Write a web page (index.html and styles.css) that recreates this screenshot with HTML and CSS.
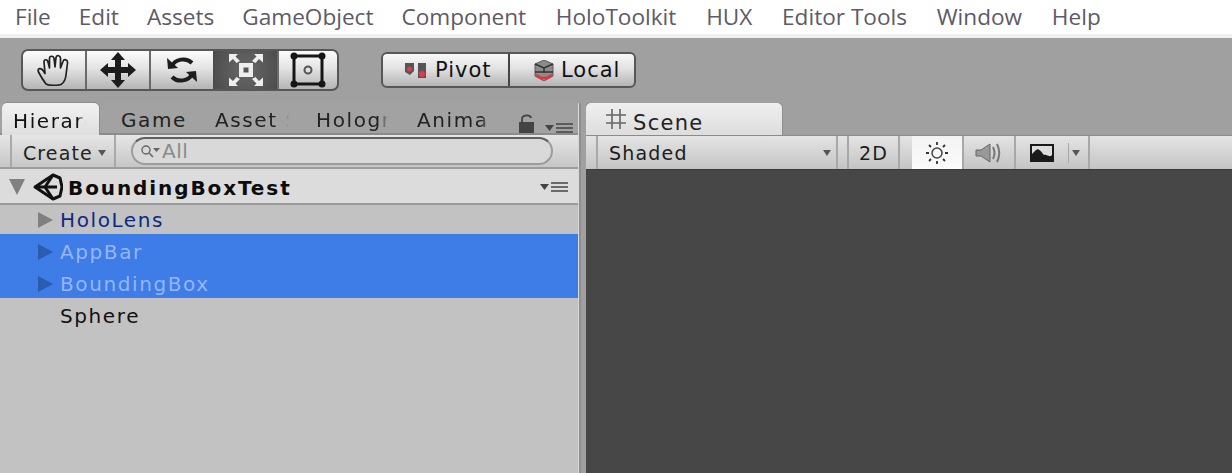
FILE: index.html
```html
<!DOCTYPE html>
<html lang="en">
<head>
<meta charset="utf-8">
<title>Unity Editor</title>
<link rel="stylesheet" href="styles.css">
</head>
<body>
<div class="editor">
  <nav class="menubar">
    <span>File</span><span>Edit</span><span>Assets</span><span>GameObject</span><span>Component</span><span>HoloToolkit</span><span>HUX</span><span>Editor Tools</span><span>Window</span><span>Help</span>
  </nav>

  <div class="toolbar">
    <div class="tools">
      <button class="tool tool-first">
        <svg width="34" height="32" viewBox="0 0 34 32"><path d="M9 30C6 26 3 21 1.500 18C0 14 4 13.500 6 16.500L8 19.500L7 8C7 5 10.500 5 11 8L12.500 14L12.500 4.500C12.500 1.500 16.500 1.500 17 4.500L18 13L19 3.500C19.500 .8 23.500 1.200 23.500 4.500L23.500 14L26 7.500C27 4.500 31 5.500 30.500 9L29 21C28.500 26 26.500 29 24 30.500C19 31.500 12 31.500 9 30Z" fill="none" stroke="#202020" stroke-width="1.700" stroke-linejoin="round"/></svg>
      </button>
      <button class="tool">
        <svg width="36" height="36" viewBox="0 0 36 36"><path d="M18 0L25 8H21V15H28V11L36 18L28 25V21H21V28H25L18 36L11 28H15V21H8V25L0 18L8 11V15H15V8H11Z" fill="#1c1c1c"/></svg>
      </button>
      <button class="tool">
        <svg width="30" height="30" viewBox="0 0 30 30"><path d="M5 11C8 4 19 2 25 8" fill="none" stroke="#1d1d1d" stroke-width="4"/><path d="M0 3L1 14L11 13Z" fill="#1d1d1d"/><path d="M25 19C22 26 11 28 5 22" fill="none" stroke="#1d1d1d" stroke-width="4"/><path d="M30 27L29 16L19 17Z" fill="#1d1d1d"/></svg>
      </button>
      <button class="tool tool-active">
        <svg width="36" height="34" viewBox="0 0 36 34" fill="#eee"><rect x="11" y="10" width="14" height="14"/><rect x="15.500" y="14.500" width="5" height="5" fill="#555"/><path d="M1 1H10L7.500 3.500L12 8L8.500 10L5 6L1 9.500ZM35 1H26L28.500 3.500L24 8L27.500 10L31 6L35 9.500ZM1 33H10L7.500 30.500L12 26L8.500 24L5 28L1 24.500ZM35 33H26L28.500 30.500L24 26L27.500 24L31 28L35 24.500Z"/></svg>
      </button>
      <button class="tool tool-last">
        <svg width="36" height="36" viewBox="0 0 36 36"><path d="M4 4H32V32H4Z" fill="none" stroke="#161616" stroke-width="3"/><circle cx="4" cy="4" r="3.500" fill="#161616"/><circle cx="32" cy="4" r="3.500" fill="#161616"/><circle cx="4" cy="32" r="3.500" fill="#161616"/><circle cx="32" cy="32" r="3.500" fill="#161616"/><circle cx="18" cy="18" r="3.500" fill="none" stroke="#555" stroke-width="2"/></svg>
      </button>
    </div>
    <div class="pivot">
      <button class="pivot-btn pivot-left">
        <svg class="pivot-icon" width="22" height="17" viewBox="0 0 22 17"><path d="M0 1H9V9L5 13L0 10Z" fill="#555"/><circle cx="4.500" cy="7" r="2.500" fill="#e8394a"/><path d="M13 1H21V16H13Z" fill="#555"/><circle cx="17" cy="12" r="3" fill="#e8394a"/></svg>
        <span>Pivot</span>
      </button>
      <button class="pivot-btn pivot-right">
        <svg class="local-icon" width="20" height="21" viewBox="0 0 20 21"><path d="M10 0L19 4V16L10 21L1 16V4Z" fill="#8c8c8c" stroke="#5a5a5a"/><path d="M1 4L10 8L19 4M10 8V13" fill="none" stroke="#333" stroke-width="1.500"/><path d="M1 12H19" stroke="#333" stroke-width="1.500"/><path d="M2 15C6 19 14 19 18 15" fill="none" stroke="#e2363f" stroke-width="2.500"/></svg>
        <span>Local</span>
      </button>
    </div>
  </div>

  <div class="docks">
    <section class="panel-left">
      <div class="tabs">
        <div class="tab tab-active tab-hier"><span class="tab-clip clip-hier">Hierarchy</span></div>
        <div class="tab tab-game"><span>Game</span></div>
        <div class="tab tab-asset"><span class="tab-clip clip-asset">Asset Store</span></div>
        <div class="tab tab-holo"><span class="tab-clip clip-holo">Holographic</span></div>
        <div class="tab tab-anim"><span class="tab-clip clip-anim">Animator</span></div>
        <svg class="lock" width="15" height="19" viewBox="0 0 15 19"><path d="M3 9V5C3 1 11 0 12 4" fill="none" stroke="#444" stroke-width="1.800"/><rect y="8" width="15" height="11" fill="#444"/></svg>
        <svg class="more more-tabs" width="28" height="10" viewBox="0 0 28 10"><path d="M0 2H9L4.500 8Z" fill="#444"/><path d="M11 1H28M11 5H28M11 9H28" stroke="#444" stroke-width="1.600"/></svg>
      </div>
      <div class="hier-bar">
        <div class="create"><span>Create</span><i class="caret"></i></div>
        <div class="search">
          <svg width="22" height="14" viewBox="0 0 22 14"><circle cx="6" cy="6" r="4" fill="none" stroke="#666" stroke-width="1.400"/><path d="M9 9L13 13" stroke="#666" stroke-width="1.600"/><path d="M13 4H20L16.500 8Z" fill="#666"/></svg>
          <span>All</span>
        </div>
      </div>
      <div class="scene-head">
        <i class="arrow-down"></i>
        <svg class="unity" width="30" height="28" viewBox="0 0 30 28"><path d="M12 14L20 2L27 5L29 14L27 23L20 26Z" fill="none" stroke="#111" stroke-width="3" stroke-linejoin="round"/><path d="M12 14L2 14L20 2M2 14L20 26M12 14H24" fill="none" stroke="#111" stroke-width="3" stroke-linejoin="round"/></svg>
        <span class="scene-name">BoundingBoxTest</span>
        <svg class="more" width="28" height="10" viewBox="0 0 28 10"><path d="M0 2H9L4.500 8Z" fill="#444"/><path d="M11 1H28M11 5H28M11 9H28" stroke="#444" stroke-width="1.600"/></svg>
      </div>
      <ul class="tree">
        <li class="row row-first"><i class="arrow-right"></i><span class="prefab">HoloLens</span></li>
        <li class="row row-sel"><i class="arrow-right"></i><span>AppBar</span></li>
        <li class="row row-sel"><i class="arrow-right"></i><span>BoundingBox</span></li>
        <li class="row"><i class="arrow-none"></i><span>Sphere</span></li>
      </ul>
    </section>

    <section class="panel-right">
      <div class="scene-tabs">
        <div class="scene-tab">
          <svg width="20" height="20" viewBox="0 0 20 20"><path d="M6 0V20M14 0V20M0 6H20M0 14H20" stroke="#666" stroke-width="1.600"/></svg>
          <span class="scene-label">Scene</span>
        </div>
      </div>
      <div class="scene-bar">
        <div class="sb sb-gap"></div>
        <div class="sb sb-shaded"><span>Shaded</span><i class="caret"></i></div>
        <div class="sb sb-gap2"></div>
        <div class="sb sb-2d"><span>2D</span></div>
        <div class="sb sb-gap3"></div>
        <div class="sb sb-sun">
          <svg width="24" height="24" viewBox="0 0 24 24"><circle cx="12" cy="12" r="5" fill="none" stroke="#444" stroke-width="1.500"/><path d="M12 1V4M12 20V23M1 12H4M20 12H23M4 4L6 6M18 18L20 20M20 4L18 6M4 20L6 18" stroke="#333" stroke-width="1.800"/></svg>
        </div>
        <div class="sb sb-audio">
          <svg width="28" height="24" viewBox="0 0 28 24"><path d="M1 9H6L15 3V21L6 15H1Z" fill="#999" stroke="#666"/><path d="M18 6C20 10 20 14 18 18M22 3C25 9 25 15 22 21" fill="none" stroke="#777" stroke-width="2"/></svg>
        </div>
        <div class="sb sb-image">
          <svg width="24" height="18" viewBox="0 0 24 18"><path d="M0 0H24V18H0Z" fill="#1a1a1a"/><path d="M2 2H22V11C19 14 17 10 14 11C12 9 9 3 6 6L2 10Z" fill="#ddd"/></svg>
          <i class="vsep"></i>
          <i class="caret caret-img"></i>
        </div>
      </div>
      <div class="viewport"></div>
    </section>
  </div>
</div>
</body>
</html>
```
FILE: styles.css
```css
* { box-sizing: border-box; }
html, body { margin: 0; padding: 0; }
body { font-family: "DejaVu Sans", sans-serif; background: #a0a0a0; }
button { font: inherit; letter-spacing: inherit; margin: 0; padding: 0; border: 0; background: none; color: inherit; }
i { display: block; }

.editor { width: 1232px; height: 473px; display: flex; flex-direction: column; overflow: hidden; }

.menubar {
  height: 38px; flex: none; background: #fff; border-bottom: 4px solid #f0f0f0;
  display: flex; align-items: center; gap: 28px; padding: 0 0 2px 15px;
  font-family: "Open Sans", sans-serif; font-size: 22.6px; color: #5e5a66;
}
.menubar span { white-space: nowrap; }
.menubar span:nth-child(n+6) { margin-left: 1.75px; }

.toolbar { height: 65px; flex: none; background: #a0a0a0; position: relative; display: flex; padding-left: 21px; }
.tools {
  margin-top: 11px; height: 42px; width: 318px; display: flex; overflow: hidden;
  border: 2px solid #575757; border-radius: 7px; background: #555;
}
.tool {
  width: 64px; flex: none; display: flex; align-items: center; justify-content: center;
  background: linear-gradient(#fbfbfb, #e4e4e4 45%, #b4b4b4);
  border-left: 2px solid #6a6a6a;
}
.tool-first { width: 62px; border-left: 0; }
.tool-last { width: auto; flex: 1; }
.tool-active { background: radial-gradient(circle, #686868, #4c4c4c); border-left-color: #4c4c4c; }

.pivot {
  margin: 14px 0 0 42px; height: 36px; width: 255px; display: flex; overflow: hidden;
  border: 2px solid #575757; border-radius: 6px;
  background: linear-gradient(#f8f8f8, #e2e2e2 45%, #b4b4b4);
  font-size: 21px; letter-spacing: 1px; color: #111;
}
.pivot-btn { display: flex; align-items: center; height: 100%; }
.pivot-left { width: 127px; padding-left: 22px; border-right: 2px solid #444; }
.pivot-right { flex: 1; padding-left: 24px; }
.pivot-icon { margin-right: 8px; }
.local-icon { margin-right: 7px; }

.docks { flex: 1; min-height: 0; display: flex; background: #a0a0a0; }

.panel-left { width: 578px; flex: none; display: flex; flex-direction: column; background: #c2c2c2; box-shadow: 1px 0 0 #d8d8d8, 3px 0 0 #8f8f8f; }
.tabs { height: 32px; flex: none; display: flex; background: #a2a2a2; border-bottom: 2px solid #8b8b8b; padding-left: 2px; position: relative; font-size: 20px; letter-spacing: 1.6px; color: #222; }
.tab { height: 30px; display: flex; align-items: center; white-space: nowrap; padding-top: 4px; }
.tab-hier { width: 97px; padding-left: 11px; }
.tab-game { width: 94px; padding-left: 22px; }
.tab-asset { width: 101px; padding-left: 22px; }
.tab-holo { width: 101px; padding-left: 22px; }
.tab-anim { width: 95px; padding-left: 22px; }
.tab-active {
  height: 32px; background: linear-gradient(#f2f2f2, #dedede); border-radius: 5px 5px 0 0;
  color: #111; position: relative; z-index: 1; box-shadow: 0 -1px 0 #8e8e8e, 1px 0 0 #8e8e8e;
}
.tab-clip { overflow: hidden; display: block; -webkit-mask-image: linear-gradient(to right, #000 88%, transparent); mask-image: linear-gradient(to right, #000 88%, transparent); }
.clip-hier { width: 73px; }
.clip-asset { width: 74px; }
.clip-holo { width: 72px; }
.clip-anim { width: 73px; }
.lock { margin: 11px 0 0 29px; flex: none; }
.more { flex: none; }
.more-tabs { margin: 20px 0 0 11px; }

.hier-bar {
  height: 34px; flex: none; display: flex; align-items: center; padding: 0 25px 0 10px;
  background: linear-gradient(#e6e6e6, #c6c6c6); border-bottom: 2px solid #9d9d9d;
  font-size: 19px; letter-spacing: 1.1px; color: #222;
}
.create {
  width: 106px; height: 100%; display: flex; align-items: center; padding: 3px 0 0 11px; flex: none;
  border-left: 2px solid #a9a9a9; border-right: 2px solid #a9a9a9;
}
.caret { width: 0; height: 0; margin-left: 5px; border: 4px solid transparent; border-top: 6px solid #555; border-bottom: 0; }
.search {
  margin-left: 15px; flex: 1; height: 28px; display: flex; align-items: center; padding: 0 0 0 7px; gap: 0;
  background: #d9d9d9; border: 2px solid #9c9c9c; border-top: 2px solid #5f5f5f; border-radius: 14px;
  color: #8a8a8a; font-size: 20px; letter-spacing: 0.5px;
}

.scene-head {
  height: 36px; flex: none; display: flex; align-items: center; padding: 2px 10px 0 9px;
  background: #dcdcdc; border-bottom: 2px solid #9a9a9a;
}
.arrow-down { width: 0; height: 0; border: 8px solid transparent; border-top: 16px solid #808080; border-bottom: 0; flex: none; }
.unity { margin-left: 8px; flex: none; }
.scene-name { margin: 2px 0 0 5px; flex: 1; font-weight: 700; font-size: 20px; letter-spacing: 1.9px; color: #0c0c0c; }

.tree { list-style: none; margin: 0; padding: 0; font-size: 20px; letter-spacing: 1.6px; color: #111; }
.row { height: 32px; display: flex; align-items: center; padding: 4px 0 0 38px; }
.row-first { height: 29px; padding-top: 1px; color: #0b2a86; }
.prefab { color: #0b2a86; }
.row-sel { background: #3e7ce8; color: #96b5f6; }
.arrow-right { width: 0; height: 0; border: 8px solid transparent; border-left: 15px solid #808080; border-right: 0; flex: none; margin-right: 7px; }
.row-sel .arrow-right { border-left-color: #2a5cb0; }
.arrow-none { width: 15px; margin-right: 7px; flex: none; }

.panel-right { flex: 1; margin-left: 8px; min-width: 0; display: flex; flex-direction: column; }
.scene-tabs { height: 33px; flex: none; display: flex; align-items: flex-end; border-bottom: 1px solid #8b8b8b; }
.scene-tab {
  width: 196px; height: 32px; display: flex; align-items: center; gap: 7px; padding: 0 0 0 20px;
  background: linear-gradient(#efefef, #dddddd); border-radius: 5px 5px 0 0;
  box-shadow: 0 -2px 0 #8e8e8e, 1px 0 0 #8e8e8e;
  font-size: 21px; letter-spacing: 1.3px; color: #222;
}
.scene-label { padding-top: 7px; }
.scene-bar {
  height: 33px; flex: none; display: flex;
  background: linear-gradient(#e4e4e4, #c4c4c4);
  font-size: 19px; letter-spacing: 1.2px; color: #1c1c1c;
}
.sb { height: 100%; display: flex; align-items: center; border-right: 2px solid #a8a8a8; flex: none; }
.sb-gap { width: 12px; }
.sb-shaded { width: 240px; padding-left: 11px; justify-content: space-between; padding-right: 5px; }
.sb-gap2 { width: 11px; }
.sb-2d { width: 51px; justify-content: center; }
.sb-gap3 { width: 12px; border-right: 0; }
.sb-sun { width: 52px; justify-content: center; background: linear-gradient(#f3f3f3, #fbfbfb); border-right-color: #a8a8a8; }
.sb-audio { width: 52px; justify-content: center; }
.sb-image { width: 74px; padding-left: 14px; }
.vsep { width: 1px; height: 20px; margin-left: 14px; background: #a8a8a8; }
.caret-img { margin-left: 3px; }
.viewport { flex: 1; background: #474747; border-top: 1px solid #3a3a3a; }
```
